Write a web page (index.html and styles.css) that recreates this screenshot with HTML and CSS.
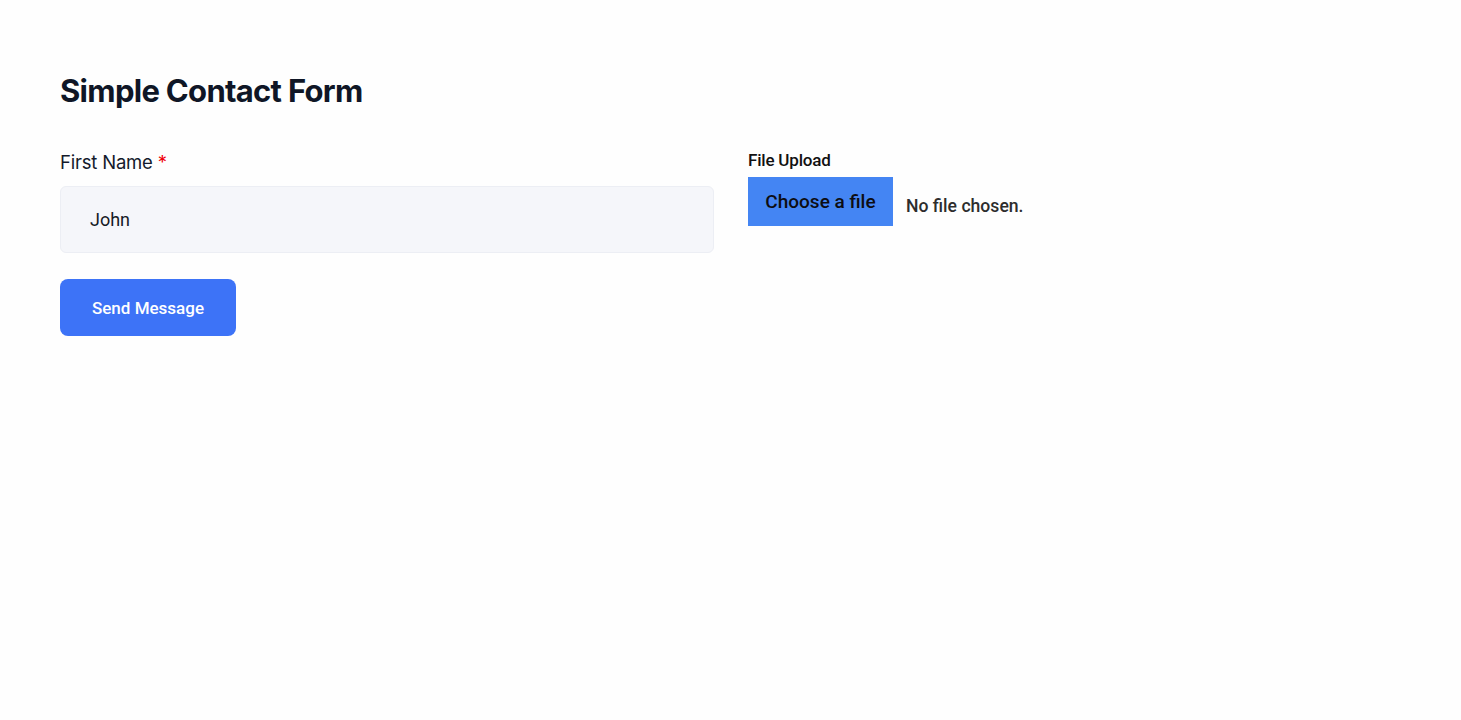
FILE: index.html
```html
<!DOCTYPE html>
<html lang="en">
<head>
<meta charset="utf-8">
<title>Simple Contact Form</title>
<link rel="stylesheet" href="styles.css">
</head>
<body>
<main class="page">
  <h1 class="title">Simple Contact Form</h1>
  <form class="form">
    <div class="col-left">
      <label class="label" for="fname">First Name <span class="req">*</span></label>
      <div class="input">John</div>
      <button type="button" class="send">Send Message</button>
    </div>
    <div class="col-right">
      <div class="file-label">File Upload</div>
      <div class="file-row">
        <span class="choose">Choose a file</span>
        <span class="nofile">No file chosen.</span>
      </div>
    </div>
  </form>
</main>
</body>
</html>
```
FILE: styles.css
```css
html, body {
  margin: 0;
  padding: 0;
  background: #fefefe;
}
.page {
  padding: 71px 60px 0 60px;
}
.title {
  margin: 0;
  font-family: Inter, "Noto Sans", sans-serif;
  font-weight: 700;
  font-size: 31px;
  line-height: 40px;
  color: #0f1626;
  letter-spacing: -0.7px;
}
.form {
  display: flex;
  gap: 34px;
  margin-top: 39px;
}
.col-left {
  width: 654px;
  display: flex;
  flex-direction: column;
  align-items: flex-start;
}
.label {
  font-family: Inter, "Noto Sans", sans-serif;
  font-size: 18.5px;
  line-height: 24px;
  color: #141a2b;
  margin-top: 0;
  letter-spacing: -0.2px;
}
.req {
  color: #f0000a;
}
.input {
  box-sizing: border-box;
  width: 654px;
  height: 67px;
  margin-top: 12px;
  padding: 0 29px;
  display: flex;
  align-items: center;
  background: #f5f6fa;
  border: 1px solid #eceef4;
  border-radius: 6px;
  font-family: Roboto, sans-serif;
  font-size: 18px;
  color: #151a26;
}
.send {
  margin-top: 26px;
  width: 176px;
  height: 57px;
  border: none;
  border-radius: 8px;
  background: #3d73f7;
  color: #ffffff;
  font-family: Roboto, sans-serif;
  font-weight: 500;
  font-size: 17px;
  cursor: pointer;
}
.col-right {
  display: flex;
  flex-direction: column;
}
.file-label {
  font-family: Roboto, sans-serif;
  font-weight: 500;
  font-size: 17px;
  line-height: 20px;
  color: #111;
  letter-spacing: -0.2px;
}
.file-row {
  display: flex;
  align-items: center;
  margin-top: 7px;
}
.choose {
  display: flex;
  align-items: center;
  justify-content: center;
  width: 145px;
  height: 49px;
  background: #4485f3;
  color: #0d0d12;
  font-family: Roboto, sans-serif;
  font-weight: 500;
  font-size: 19px;
}
.nofile {
  margin-left: 13px;
  margin-top: 8px;
  font-family: Roboto, sans-serif;
  font-weight: 500;
  font-size: 17.6px;
  color: #2d2d2d;
}
```
